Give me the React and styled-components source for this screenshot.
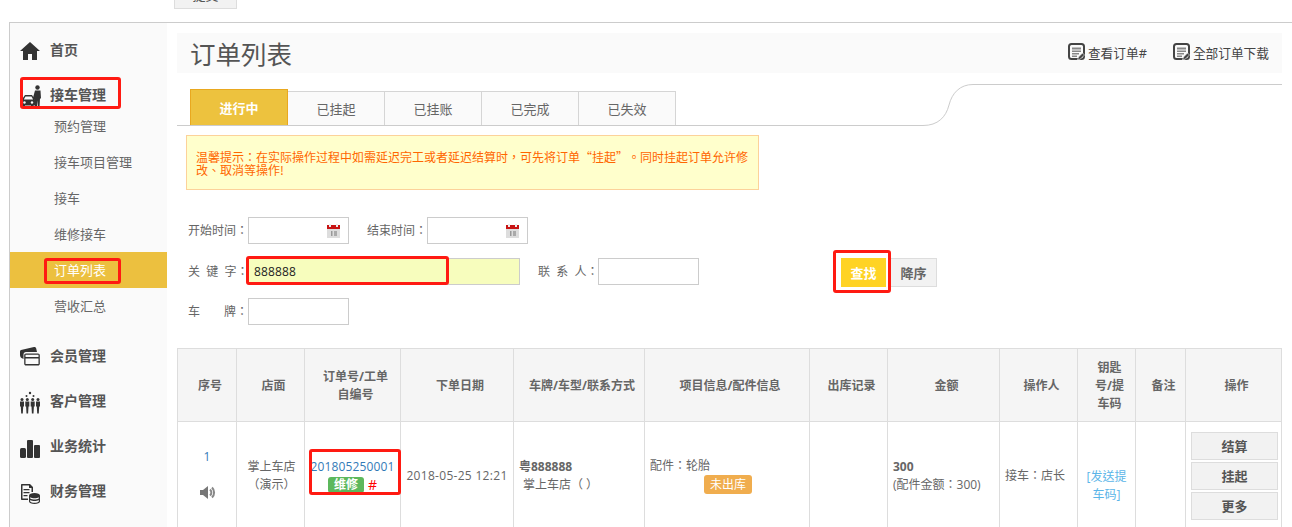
import React from 'react';
import styled, { createGlobalStyle } from 'styled-components';

const GlobalStyle = createGlobalStyle`
  html, body {
    margin: 0;
    height: 527px;
    overflow: hidden;
    background: #fff;
    font-family: "Open Sans", "Noto Sans CJK TC", sans-serif;
    font-size: 12px;
    color: #666;
    text-spacing-trim: space-all;
  }
`;

const TopStub = styled.div`
  height: 9px;
  padding-left: 174px;
  margin-bottom: 13px;
`;

const StubButton = styled.div`
  width: 63px;
  height: 9px;
  box-sizing: border-box;
  background: #f2f2f2;
  border: 1px solid #ddd;
  border-top: 0;
  overflow: hidden;
  display: flex;
  justify-content: center;
  align-items: flex-end;
  padding-bottom: 6px;
  font-size: 13px;
  line-height: 13px;
  color: #555;
`;

const Frame = styled.div`
  display: flex;
  margin-left: 9px;
  border-top: 1px solid #ccc;
  border-left: 1px solid #ccc;
`;

const Sidebar = styled.nav`
  flex: 0 0 157px;
  display: flex;
  flex-direction: column;
  height: 504px;
  padding-top: 5px;
  box-sizing: border-box;
  background: #fafafa;
`;

const NavItem = styled.div`
  position: relative;
  display: flex;
  align-items: center;
  flex: 0 0 35px;
  margin: 5px 0;
  padding-left: 10px;
  font-size: 14px;
  font-weight: 700;
  color: #555;
`;

const NavLabel = styled.span`
  padding-bottom: 4px;
`;

const NavIcon = styled.svg`
  width: 20px;
  height: 24px;
  margin-right: 10px;
  fill: #333;
  flex: none;
  overflow: visible;
`;

const SubList = styled.div`
  margin: -10px 0 10px;
`;

const SubItem = styled.div`
  position: relative;
  height: 36px;
  line-height: 36px;
  padding-left: 44px;
  font-size: 13px;
  color: ${({ $active }) => ($active ? '#fff' : '#666')};
  background: ${({ $active }) => ($active ? '#ecc03f' : 'transparent')};
`;

const Mark = styled.span`
  position: absolute;
  left: ${({ $left }) => $left}px;
  top: ${({ $top }) => $top}px;
  width: ${({ $w }) => $w}px;
  height: ${({ $h }) => $h}px;
  box-sizing: border-box;
  border: 3px solid #ff1a12;
  border-radius: 3px;
  pointer-events: none;
`;

const Main = styled.main`
  flex: 1;
  padding: 10px 10px 0;
  min-width: 0;
`;

const PageHeader = styled.header`
  display: flex;
  align-items: center;
  justify-content: space-between;
  height: 40px;
  padding: 0 13px;
  margin-bottom: 11px;
  background: #fafafa;
`;

const Title = styled.h1`
  margin: 0;
  padding-bottom: 2px;
  font-size: 25.5px;
  font-weight: 400;
  color: #555;
`;

const HeaderLinks = styled.div`
  display: flex;
  gap: 26px;
  padding-bottom: 2px;
`;

const HeaderLink = styled.a`
  display: flex;
  align-items: center;
  gap: 3px;
  font-size: 12.7px;
  color: #444;
`;

const TabRow = styled.div`
  display: flex;
  align-items: flex-end;
  height: 42px;
`;

const TabList = styled.div`
  flex: 0 0 746px;
  display: flex;
  align-items: flex-end;
  height: 37px;
  box-sizing: border-box;
  padding-left: 13px;
  border-bottom: 1px solid #ccc;
`;

const Tab = styled.div`
  width: ${({ $active }) => ($active ? 98 : 97)}px;
  height: ${({ $active }) => ($active ? 36 : 34)}px;
  box-sizing: border-box;
  display: flex;
  align-items: center;
  justify-content: center;
  font-size: 13px;
  font-weight: ${({ $active }) => ($active ? 700 : 400)};
  color: ${({ $active }) => ($active ? '#fff' : '#666')};
  background: ${({ $active }) => ($active ? '#edc23e' : '#fafafa')};
  border: 1px solid ${({ $active }) => ($active ? '#e9a81f' : '#d5d5d5')};
  border-left-width: ${({ $active }) => ($active ? 1 : 0)}px;
  border-bottom: 0;
`;

const TabCurve = styled.svg`
  flex: 0 0 359px;
  height: 42px;
`;

const Notice = styled.div`
  display: flex;
  align-items: center;
  width: 573px;
  height: 55px;
  box-sizing: border-box;
  margin: 9px 0 27px 9px;
  padding: 1px 9px 0;
  background: #ffffcc;
  border: 1px solid #fcd29a;
  font-family: "Noto Sans CJK TC", sans-serif;
  font-size: 12px;
  line-height: 13px;
  color: #f60;
`;

const FilterRow = styled.div`
  display: flex;
  align-items: flex-start;
  height: 27px;
  padding-left: 11px;
  margin-bottom: ${({ $gap }) => $gap || 0}px;
`;

const FieldLabel = styled.label`
  flex: 0 0 60px;
  min-width: 0;
  line-height: 27px;
  white-space: nowrap;
  color: #666;
`;

const Field = styled.div`
  position: relative;
  display: flex;
  align-items: center;
  width: ${({ $w }) => $w || 101}px;
  height: 27px;
  box-sizing: border-box;
  margin-right: 18px;
  padding-left: 5px;
  background: ${({ $filled }) => ($filled ? '#f7fdbd' : '#fff')};
  border: 1px solid #ccc;
  font-size: 12px;
  letter-spacing: 0.15px;
  color: #222;
`;

const CalendarIcon = styled.svg`
  position: absolute;
  right: 8px;
  top: 6px;
  width: 13px;
  height: 14px;
`;

const ButtonSlot = styled.div`
  position: relative;
  margin-left: 124px;
  margin-right: 4px;
`;

const FilterButton = styled.button`
  display: block;
  width: ${({ $w }) => $w}px;
  height: 29px;
  padding: 0;
  font: inherit;
  font-size: 13px;
  font-weight: 700;
  color: ${({ $primary }) => ($primary ? '#fff' : '#666')};
  background: ${({ $primary }) => ($primary ? '#ffd324' : '#f2f2f2')};
  border: 1px solid ${({ $primary }) => ($primary ? '#ffd324' : '#ddd')};
`;

const OrdersTable = styled.table`
  width: 1104px;
  margin: 23px 0 0;
  table-layout: fixed;
  border-collapse: collapse;
`;

const HeadCell = styled.th`
  height: 73px;
  padding: 2px 3px 0 9px;
  box-sizing: border-box;
  background: #f5f5f5;
  border: 1px solid #ddd;
  font-size: 12px;
  font-weight: 700;
  line-height: 18px;
  color: #666;
  text-align: center;
`;

const Cell = styled.td`
  height: 108px;
  padding: 0 ${({ $pad }) => $pad ?? 5}px;
  border: 1px solid #ddd;
  font-size: 12px;
  line-height: 18px;
  color: #666;
  text-align: ${({ $align }) => $align || 'center'};
  vertical-align: middle;
`;

const DateText = styled.span`
  white-space: nowrap;
  letter-spacing: 0.3px;
`;

const RowIndex = styled.div`
  color: #337ab7;
  margin: -3px 0 18px;
`;

const SpeakerIcon = styled.svg`
  display: block;
  width: 17px;
  height: 17px;
  margin: 0 auto;
`;

const StoreName = styled.div`
  padding-left: 2px;
`;

const OrderBox = styled.div`
  position: relative;
  line-height: 18px;
`;

const OrderLink = styled.a`
  color: #337ab7;
  white-space: nowrap;
  letter-spacing: 0.15px;
`;

const OrderMeta = styled.div`
  display: flex;
  justify-content: center;
  align-items: center;
  gap: 4px;
`;

const Badge = styled.span`
  display: inline-block;
  padding: 0 ${({ $pad }) => $pad}px;
  height: ${({ $h }) => $h}px;
  line-height: ${({ $h }) => $h}px;
  border-radius: 3px;
  color: #fff;
  font-weight: ${({ $bold }) => ($bold ? 700 : 400)};
  background: ${({ $color }) => $color};
`;

const HashMark = styled.span`
  color: #f00;
  font-size: 14px;
`;

const Plate = styled.div`
  font-weight: 700;
`;

const Indented = styled.div`
  padding-left: 4px;
`;

const PartsBadgeRow = styled.div`
  padding-left: 54px;
  line-height: 20px;
`;

const SendLink = styled.a`
  display: block;
  padding-top: 20px;
  color: #5bb5e8;
`;

const Amount = styled.div`
  font-weight: 700;
`;

const ActionStack = styled.div`
  display: flex;
  flex-direction: column;
  gap: 2px;
  align-items: flex-start;
  padding-left: 5px;
`;

const ActionButton = styled.button`
  width: 87px;
  height: 28px;
  padding: 0;
  font: inherit;
  font-size: 13px;
  font-weight: 700;
  color: #555;
  background: #f2f2f2;
  border: 1px solid #ddd;
`;

const HomeGlyph = () => (
  <NavIcon viewBox="0 0 20 24">
    <path d="M10 3 0 12h3v9h5v-6h4v6h5v-9h3z" />
  </NavIcon>
);

const ReceptionGlyph = () => (
  <NavIcon viewBox="0 0 20 24">
    <circle cx="17.500" cy="3.500" r="2.200" />
    <path d="M15 6.500h5.500l.5 8h-1l-.5 9h-1.500l-.5-7-.5 7H15V15.500l-1.500 1-1-1z" />
    <path d="M5 11h7l3 5v5.500h-1.500v2H11v-2H5v2H2.500v-2H1.500V16z" />
    <path d="M5.500 12.500h6l1.600 3H3.800z" fill="#fafafa" />
    <circle cx="4.500" cy="18.500" r="1.200" fill="#fafafa" />
    <circle cx="12" cy="18.500" r="1.200" fill="#fafafa" />
  </NavIcon>
);

const MemberGlyph = () => (
  <NavIcon viewBox="0 0 20 24">
    <path d="M1 5 14 2c1-.2 2 .4 2.200 1.400L17 7H6C4.500 7 3.500 8 3.500 9.500V14L1.500 13C.6 12.500 0 11 0 10V7c0-1 .3-1.800 1-2z" />
    <path d="M6 8.500h12c1 0 1.800.8 1.800 1.800v8.400c0 1-.8 1.800-1.800 1.800H6c-1 0-1.800-.8-1.800-1.800v-8.400c0-1 .8-1.800 1.800-1.800zm-.5 3.500h13v-2.200h-13zm0 1.500v5.500h13v-5.500z" fillRule="evenodd" />
  </NavIcon>
);

const CustomerGlyph = () => (
  <NavIcon viewBox="0 0 20 24">
    <circle cx="10" cy="3" r="1.200" />
    <circle cx="6.500" cy="6" r="1" />
    <circle cx="13.500" cy="6" r="1" />
    {[2, 7.300, 12.700, 18].map((x) => (
      <g key={x}>
        <circle cx={x} cy="9.500" r="1.500" />
        <path d={`M${x - 2} 11.500h4v5h-.8l-.4 7h-1.600l-.4-7h-.8z`} />
      </g>
    ))}
  </NavIcon>
);

const StatsGlyph = () => (
  <NavIcon viewBox="0 0 20 24">
    <rect x="0" y="13" width="6" height="10" rx="1.500" />
    <rect x="7" y="5" width="6" height="18" rx="1" />
    <rect x="14" y="10" width="6" height="13" rx="1" />
  </NavIcon>
);

const FinanceGlyph = () => (
  <NavIcon viewBox="0 0 20 24">
    <path d="M2 4h8l3 3v5h-1.500V8H9V5.500H2.500v13H8V20H2c-.6 0-1-.4-1-1V5c0-.6.4-1 1-1zM3.500 9h6v1.300h-6zm0 3h6v1.300h-6zm0 3h4v1.300h-4z" />
    <path d="M14.500 13c3 0 5.500 1 5.500 2.400v6.200c0 1.400-2.500 2.400-5.500 2.400S9 23 9 21.600v-6.200C9 14 11.500 13 14.500 13zm-4.300 4.200v1.200c1 .7 2.600 1 4.300 1s3.300-.3 4.300-1v-1.200c-1 .6-2.600 1-4.300 1s-3.300-.4-4.300-1zm0 2.700v1.500c.6.8 2.300 1.400 4.300 1.400s3.700-.6 4.300-1.400v-1.500c-1 .6-2.600 1-4.300 1s-3.300-.4-4.300-1z" fillRule="evenodd" />
  </NavIcon>
);

const ListEditIcon = () => (
  <svg width="17" height="18" viewBox="0 0 17 18">
    <rect x="1" y="1" width="15" height="15" rx="2.500" fill="none" stroke="#444" strokeWidth="2" />
    <path d="M4 4.500h9v2H4zm0 3h9v1.500H4zm0 2.500h7v1.500H4zm0 2.500h5V14H4z" fill="#888" />
    <path d="M9.500 17l1-3 4-4 2 2-4 4z" fill="#444" stroke="#fff" strokeWidth=".6" />
  </svg>
);

const CalendarGlyph = () => (
  <CalendarIcon viewBox="0 0 13 14">
    <rect x="0" y="1" width="13" height="13" fill="#ddd" />
    <rect x="0" y="1" width="13" height="4" fill="#c81414" />
    <rect x="2" y="0" width="2" height="3" fill="#eee" />
    <rect x="9" y="0" width="2" height="3" fill="#eee" />
    <rect x="4" y="7" width="1.500" height="5" fill="#999" />
    <rect x="7" y="7" width="3" height="5" fill="#aaa" />
  </CalendarIcon>
);

const TAB_NAMES = ['已挂起', '已挂账', '已完成', '已失效'];
const SUB_NAV = ['预约管理', '接车项目管理', '接车', '维修接车', '订单列表', '营收汇总'];
const COLUMNS = [59, 68, 96, 113, 131, 165, 78, 112, 78, 58, 50, 96];

export default function App() {
  return (
    <>
      <GlobalStyle />
      <TopStub>
        <StubButton>提交</StubButton>
      </TopStub>
      <Frame>
        <Sidebar>
          <NavItem>
            <HomeGlyph />
            <NavLabel>首页</NavLabel>
          </NavItem>
          <NavItem>
            <ReceptionGlyph />
            <NavLabel>接车管理</NavLabel>
            <Mark $left={10} $top={-1} $w={101} $h={32} />
          </NavItem>
          <SubList>
            {SUB_NAV.map((name) => (
              <SubItem key={name} $active={name === '订单列表'}>
                {name}
                {name === '订单列表' && <Mark $left={34} $top={6} $w={77} $h={26} />}
              </SubItem>
            ))}
          </SubList>
          <NavItem>
            <MemberGlyph />
            <NavLabel>会员管理</NavLabel>
          </NavItem>
          <NavItem>
            <CustomerGlyph />
            <NavLabel>客户管理</NavLabel>
          </NavItem>
          <NavItem>
            <StatsGlyph />
            <NavLabel>业务统计</NavLabel>
          </NavItem>
          <NavItem>
            <FinanceGlyph />
            <NavLabel>财务管理</NavLabel>
          </NavItem>
        </Sidebar>

        <Main>
          <PageHeader>
            <Title>订单列表</Title>
            <HeaderLinks>
              <HeaderLink>
                <ListEditIcon />
                查看订单#
              </HeaderLink>
              <HeaderLink>
                <ListEditIcon />
                全部订单下载
              </HeaderLink>
            </HeaderLinks>
          </PageHeader>

          <TabRow>
            <TabList>
              <Tab $active>进行中</Tab>
              {TAB_NAMES.map((name) => (
                <Tab key={name}>{name}</Tab>
              ))}
            </TabList>
            <TabCurve viewBox="0 0 359 42">
              <path d="M0 41.500C15 41.500 23 33 26 21 29 9 37 .5 50 .5H359" fill="none" stroke="#ccc" />
            </TabCurve>
          </TabRow>

          <Notice>
            温馨提示：在实际操作过程中如需延迟完工或者延迟结算时，可先将订单“挂起”。同时挂起订单允许修改、取消等操作!
          </Notice>

          <FilterRow $gap={14}>
            <FieldLabel>开始时间：</FieldLabel>
            <Field>
              <CalendarGlyph />
            </Field>
            <FieldLabel>结束时间：</FieldLabel>
            <Field>
              <CalendarGlyph />
            </Field>
          </FilterRow>
          <FilterRow $gap={13}>
            <FieldLabel>关{'\u00a0\u00a0'}键{'\u00a0\u00a0'}字：</FieldLabel>
            <Field $w={272} $filled>
              888888
              <Mark $left={-3} $top={-3} $w={203} $h={29} />
            </Field>
            <FieldLabel>联{'\u00a0\u00a0'}系{'\u00a0\u00a0'}人：</FieldLabel>
            <Field />
            <ButtonSlot>
              <FilterButton $primary $w={45}>查找</FilterButton>
              <Mark $left={-8} $top={-8} $w={58} $h={43} />
            </ButtonSlot>
            <FilterButton $w={47}>降序</FilterButton>
          </FilterRow>
          <FilterRow>
            <FieldLabel>车{'\u3000\u3000'}牌：</FieldLabel>
            <Field />
          </FilterRow>

          <OrdersTable>
            <colgroup>
              {COLUMNS.map((width, i) => (
                <col key={i} width={width} />
              ))}
            </colgroup>
            <thead>
              <tr>
                <HeadCell>序号</HeadCell>
                <HeadCell>店面</HeadCell>
                <HeadCell>订单号/工单<br />自编号</HeadCell>
                <HeadCell>下单日期</HeadCell>
                <HeadCell>车牌/车型/联系方式</HeadCell>
                <HeadCell>项目信息/配件信息</HeadCell>
                <HeadCell>出库记录</HeadCell>
                <HeadCell>金额</HeadCell>
                <HeadCell>操作人</HeadCell>
                <HeadCell>钥匙<br />号/提<br />车码</HeadCell>
                <HeadCell>备注</HeadCell>
                <HeadCell>操作</HeadCell>
              </tr>
            </thead>
            <tbody>
              <tr>
                <Cell>
                  <RowIndex>1</RowIndex>
                  <SpeakerIcon viewBox="0 0 17 17">
                    <path d="M1 6h3l5-4v13l-5-4H1z" fill="#777" />
                    <path d="M11 5.500a4 4 0 0 1 0 6M13 3.500a7 7 0 0 1 0 10" fill="none" stroke="#888" strokeWidth="2" />
                  </SpeakerIcon>
                </Cell>
                <Cell><StoreName>掌上车店<br />（演示）</StoreName></Cell>
                <Cell $pad={0}>
                  <OrderBox>
                    <OrderLink>201805250001</OrderLink>
                    <OrderMeta>
                      <Badge $color="#5cb85c" $pad={6} $h={16} $bold>维修</Badge>
                      <HashMark>#</HashMark>
                    </OrderMeta>
                    <Mark $left={4} $top={-9} $w={92} $h={46} />
                  </OrderBox>
                </Cell>
                <Cell><DateText>2018-05-25 12:21</DateText></Cell>
                <Cell $align="left">
                  <Plate>粤888888</Plate>
                  <Indented>掌上车店（ ）</Indented>
                </Cell>
                <Cell $align="left">
                  配件：轮胎
                  <PartsBadgeRow>
                    <Badge $color="#f0ad4e" $pad={6} $h={19}>未出库</Badge>
                  </PartsBadgeRow>
                </Cell>
                <Cell />
                <Cell $align="left">
                  <Amount>300</Amount>
                  (配件金额：300)
                </Cell>
                <Cell $align="left">接车：店长</Cell>
                <Cell>
                  <SendLink>[发送提<br />车码]</SendLink>
                </Cell>
                <Cell />
                <Cell $pad={0}>
                  <ActionStack>
                    <ActionButton>结算</ActionButton>
                    <ActionButton>挂起</ActionButton>
                    <ActionButton>更多</ActionButton>
                  </ActionStack>
                </Cell>
              </tr>
            </tbody>
          </OrdersTable>
        </Main>
      </Frame>
    </>
  );
}
